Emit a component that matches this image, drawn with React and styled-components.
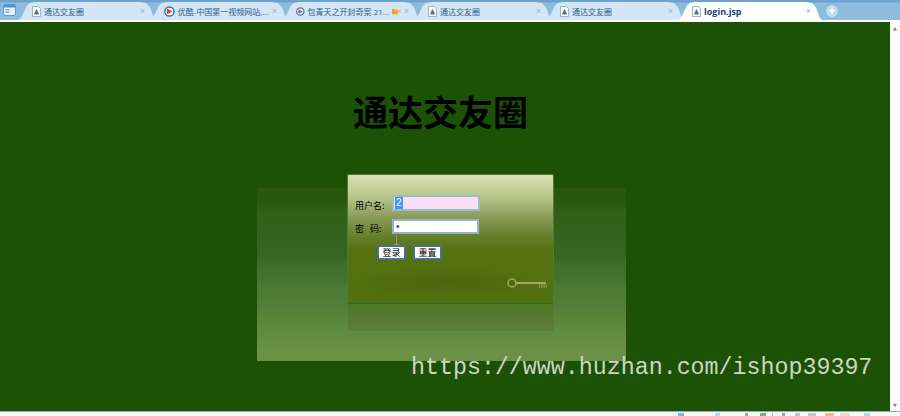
import styled, { createGlobalStyle } from "styled-components";

const GlobalStyle = createGlobalStyle`
  html, body {
    margin: 0;
    padding: 0;
    overflow: hidden;
  }
`;

const TABS = [
  { id: 1, title: "通达交友圈", kind: "doc" },
  { id: 2, title: "优酷-中国第一视频网站,...", kind: "play" },
  { id: 3, title: "包青天之开封奇案 21...", kind: "play", camera: true },
  { id: 4, title: "通达交友圈", kind: "doc" },
  { id: 5, title: "通达交友圈", kind: "doc" },
  { id: 6, title: "login.jsp", kind: "doc", active: true },
];

// tray icons cut off by the bottom edge of the window
const TRAY = [
  { x: 678, w: 6, color: "#7db8e6" },
  { x: 715, w: 5, color: "#b7d6ee" },
  { x: 745, w: 3, color: "#a4a4a4" },
  { x: 760, w: 6, color: "#7dbb62" },
  { x: 772, w: 1, color: "#a8c0d8" },
  { x: 782, w: 3, color: "#8fa9c4" },
  { x: 795, w: 5, color: "#b4c6da" },
  { x: 808, w: 8, color: "#c2c6ca" },
  { x: 825, w: 9, color: "#eebb88" },
  { x: 840, w: 10, color: "#f2dcc0" },
  { x: 864, w: 6, color: "#b7d6ee" },
];

function DocIcon() {
  return (
    <svg width="9" height="11" viewBox="0 0 9 11">
      <path d="M.5.5h6l2 2v8h-8z" fill="#f4f6f8" stroke="#a9b4c0" />
      <path d="M2 8l2.500-5 1 2L7 8.500H4z" fill="#56708c" />
    </svg>
  );
}

function PlayIcon() {
  return (
    <svg width="11" height="11" viewBox="0 0 11 11">
      <circle cx="5.500" cy="5.500" r="4.700" fill="#fff" stroke="#2277c4" strokeWidth="1.500" />
      <path d="M3 2.500l5.800 3-5.800 3z" fill="#e2402c" />
    </svg>
  );
}

function CameraIcon() {
  return (
    <svg width="11" height="8" viewBox="0 0 11 8">
      <path d="M0 1.500h3l1 1h3.500v5.500H0z" fill="#f2a81d" />
      <path d="M8 3.500L11 1.500v5.500L8 5.500z" fill="#f7c04a" />
    </svg>
  );
}

function AppIcon() {
  return (
    <svg width="13" height="12" viewBox="0 0 13 12">
      <rect x=".5" y=".5" width="12" height="11" rx="1.500" fill="#e6f1fa" stroke="#5f9bd0" />
      <rect x="1" y="1" width="11" height="2.500" fill="#4d93d3" />
      <rect x="2.500" y="5" width="4" height="1.200" fill="#6aa5d8" />
      <rect x="2.500" y="7.500" width="4" height="1.200" fill="#6aa5d8" />
    </svg>
  );
}

function KeyIcon() {
  return (
    <svg width="42" height="14" viewBox="0 0 42 14">
      <circle cx="6" cy="6" r="4" fill="none" stroke="#a3a862" strokeWidth="1.500" />
      <path d="M10 5h30v2H10z" fill="#a3a862" />
      <path d="M33 7h8v4h-8z" fill="#7f9040" />
      <path d="M34.500 7v4M37 7v4M39.500 7v4" stroke="#56701c" strokeWidth=".7" />
    </svg>
  );
}

function IBeam() {
  return (
    <svg width="5" height="12" viewBox="0 0 5 12">
      <path d="M0 .5h5M2.500.5v11M0 11.500h5" stroke="#8f939e" fill="none" />
    </svg>
  );
}

function TabItem({ tab }) {
  return (
    <Tab $active={tab.active}>
      {tab.kind === "doc" ? <DocIcon /> : <PlayIcon />}
      <TabTitle $active={tab.active}>{tab.title}</TabTitle>
      {tab.camera ? <CameraIcon /> : null}
      <TabClose>×</TabClose>
    </Tab>
  );
}

function App() {
  return (
    <>
      <GlobalStyle />
      <Window>
        <TabBar>
          <AppButton>
            <AppIcon />
          </AppButton>
          {TABS.map((tab) => (
            <TabItem key={tab.id} tab={tab} />
          ))}
          <AddTab>+</AddTab>
        </TabBar>
        <Body>
          <Page>
            <Backdrop />
            <Reflection />
            <Title>通达交友圈</Title>
            <Card>
              <Field>
                <FieldLabel>用户名:</FieldLabel>
                <NameInput>
                  <Selected>2</Selected>
                </NameInput>
              </Field>
              <Field>
                <FieldLabel>密&nbsp;&nbsp;&nbsp;码:</FieldLabel>
                <PasswordInput>•</PasswordInput>
              </Field>
              <Cursor>
                <IBeam />
              </Cursor>
              <Buttons>
                <FormButton>登录</FormButton>
                <FormButton>重置</FormButton>
              </Buttons>
              <KeyMark>
                <KeyIcon />
              </KeyMark>
            </Card>
            <Watermark>https://www.huzhan.com/ishop39397</Watermark>
          </Page>
          <Scrollbar>
            <ScrollArrow>▲</ScrollArrow>
            <ScrollArrow>▼</ScrollArrow>
          </Scrollbar>
        </Body>
        <StatusBar>
          {TRAY.map((item) => (
            <TrayIcon key={item.x} $x={item.x} $w={item.w} $color={item.color} />
          ))}
        </StatusBar>
      </Window>
    </>
  );
}

const Window = styled.div`
  width: 900px;
  height: 416px;
  display: grid;
  grid-template-rows: 22px 1fr 5px;
  background: #fff;
  overflow: hidden;
`;

const TabBar = styled.div`
  display: flex;
  align-items: flex-end;
  height: 20px;
  padding-left: 18px;
  border-bottom: 2px solid #fff;
  background: linear-gradient(#6ea3cf 0, #6ea3cf 2px, #8dbbdd 3px, #8fbcdd 100%);
  position: relative;
`;

const AppButton = styled.div`
  position: absolute;
  left: 3px;
  top: 4px;
  width: 13px;
  height: 12px;
  display: flex;
`;

const Tab = styled.div`
  flex: none;
  box-sizing: border-box;
  width: ${(p) => (p.$active ? "144px" : "138px")};
  height: 18px;
  margin-right: -6px;
  padding: 0 11px 0 14px;
  display: flex;
  align-items: center;
  gap: 3px;
  background: ${(p) => (p.$active ? "#fff" : "#d4e5f4")};
  position: relative;
  z-index: ${(p) => (p.$active ? 2 : 1)};
  clip-path: polygon(0 100%, 3px 88%, 9px 20%, 12px 5%, 17px 0, calc(100% - 17px) 0, calc(100% - 10px) 6%, calc(100% - 6px) 30%, calc(100% - 2px) 90%, 100% 100%);
`;

const TabTitle = styled.span`
  font: ${(p) => (p.$active ? "bold 9px" : "8px")} "Open Sans", "Noto Sans CJK SC", sans-serif;
  color: ${(p) => (p.$active ? "#1c3f66" : "#2f5c88")};
  white-space: nowrap;
`;

const TabClose = styled.span`
  margin-left: auto;
  font: 9px "Liberation Sans", sans-serif;
  color: #9fb0bf;
`;

const AddTab = styled.div`
  flex: none;
  width: 12px;
  height: 12px;
  margin: 0 0 3px 10px;
  border-radius: 50%;
  background: #c4dcf0;
  color: #fff;
  font: bold 12px/12px "Liberation Sans", sans-serif;
  text-align: center;
`;

const Body = styled.div`
  display: flex;
  min-height: 0;
`;

const Page = styled.div`
  flex: 1;
  background: #1c5205;
  position: relative;
  overflow: hidden;
`;

const Backdrop = styled.div`
  position: absolute;
  left: 257px;
  top: 166px;
  width: 369px;
  height: 173px;
  background: linear-gradient(
    #27560e 0,
    #2a5810 9%,
    #315f18 13%,
    #33621c 24%,
    #326320 29%,
    #366822 40%,
    #40702b 45%,
    #44722e 52%,
    #4a7a35 57%,
    #4f7c36 64%,
    #557f38 69%,
    #5a8539 76%,
    #5f8a3f 81%,
    #648d42 88%,
    #6a9146 93%,
    #6a9146 100%
  );
`;

const Reflection = styled.div`
  position: absolute;
  left: 348px;
  top: 281px;
  width: 206px;
  height: 28px;
  background: linear-gradient(#4c7a24, #55782f 45%, #5c7c3c 90%, #5e8039);
`;

const Title = styled.h1`
  margin: 0;
  padding: 71px 9px 0 0;
  height: 81px;
  text-align: center;
  font: bold 35px/44px "Liberation Serif", "Noto Sans CJK SC", serif;
  color: #000;
`;

const Card = styled.div`
  box-sizing: border-box;
  width: 207px;
  height: 130px;
  margin: 0 0 0 347px;
  padding: 20px 0 0 7px;
  border: 1px solid #4d7a3a;
  border-bottom-color: #2f6a20;
  border-radius: 2px;
  background:
    radial-gradient(ellipse 90px 16px at 48% 84%, rgba(70, 96, 16, 0.7), rgba(70, 96, 16, 0)),
    linear-gradient(#d9e1b2 0, #b8c48a 18%, #8c9e5c 32%, #6a8434 45%, #54720f 58%, #50700f 100%);
  position: relative;
  display: flex;
  flex-direction: column;
`;

const Field = styled.div`
  display: flex;
  align-items: center;
  height: 16px;
  margin-bottom: 7px;
`;

const FieldLabel = styled.span`
  width: 37px;
  flex: none;
  padding-top: 5px;
  font: 9px "Noto Sans CJK SC", sans-serif;
  color: #000;
  white-space: nowrap;
`;

const NameInput = styled.div`
  box-sizing: border-box;
  width: 88px;
  height: 16px;
  padding-left: 1px;
  border: 2px solid #98c0c4;
  background: #f6dff6;
  font: 10px/12px "Liberation Sans", sans-serif;
  color: #fff;
`;

const Selected = styled.span`
  display: inline-block;
  padding: 0 1px;
  background: #3f95f5;
`;

const PasswordInput = styled.div`
  box-sizing: border-box;
  width: 87px;
  height: 15px;
  padding-left: 2px;
  border: 2px solid #8fb8c8;
  background: #fff;
  font: 10px/11px "Liberation Sans", sans-serif;
  color: #2a3fb0;
`;

const Cursor = styled.div`
  position: absolute;
  left: 46px;
  top: 58px;
  display: flex;
`;

const Buttons = styled.div`
  display: flex;
  gap: 7px;
  margin: 4px 0 0 22px;
`;

const FormButton = styled.div`
  box-sizing: border-box;
  width: 29px;
  height: 15px;
  border: 2px solid #4a6e8c;
  background: #fff;
  font: 9px/11px "Noto Sans CJK SC", sans-serif;
  color: #000;
  text-align: center;
`;

const KeyMark = styled.div`
  position: absolute;
  right: 5px;
  bottom: 12px;
  display: flex;
`;

const Watermark = styled.div`
  position: absolute;
  left: 411px;
  top: 331px;
  font: 23.3px/30px "Liberation Mono", monospace;
  color: #ced4c6;
  white-space: nowrap;
`;

const Scrollbar = styled.div`
  width: 10px;
  background: #fbfbfb;
  display: flex;
  flex-direction: column;
  justify-content: space-between;
  padding: 3px 0;
`;

const ScrollArrow = styled.span`
  font: 5px/6px "DejaVu Sans", sans-serif;
  color: #888;
  text-align: center;
`;

const StatusBar = styled.div`
  box-sizing: border-box;
  border-top: 1px solid #8fb0b0;
  background: #f4f8f8;
  position: relative;
  overflow: hidden;
`;

const TrayIcon = styled.span`
  position: absolute;
  left: ${(p) => p.$x}px;
  top: 1px;
  width: ${(p) => p.$w}px;
  height: 4px;
  background: ${(p) => p.$color};
`;

export default App;
